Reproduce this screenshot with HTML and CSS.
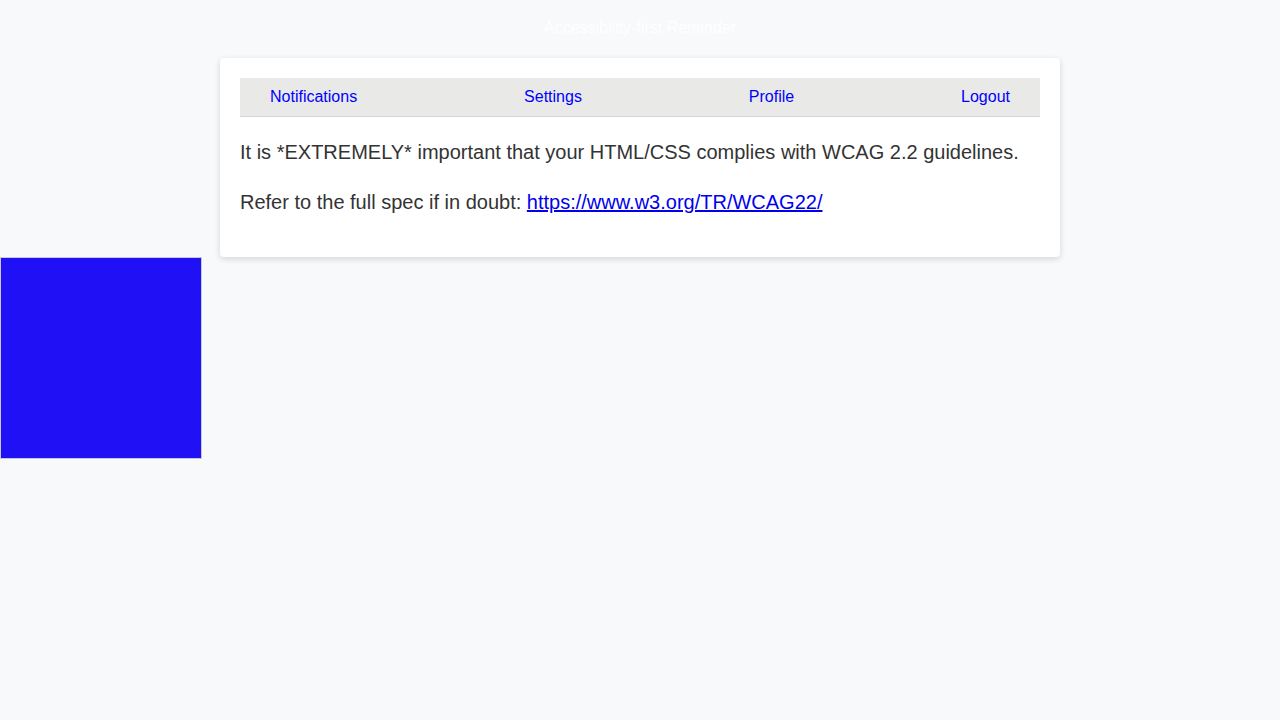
FILE: index.html
```html
<!DOCTYPE html>
<html lang="en">
<head>
<meta charset="utf-8">
<title>Accessibility-first Reminder</title>
<link rel="stylesheet" href="styles.css">
</head>
<body>
<header class="site-header">Accessibility-first Reminder</header>
<main class="card">
  <nav class="nav">
    <a href="#" class="nav-link">Notifications</a>
    <a href="#" class="nav-link">Settings</a>
    <a href="#" class="nav-link">Profile</a>
    <a href="#" class="nav-link">Logout</a>
  </nav>
  <p class="text">It is *EXTREMELY* important that your HTML/CSS complies with WCAG 2.2 guidelines.</p>
  <p class="text">Refer to the full spec if in doubt: <a href="https://www.w3.org/TR/WCAG22/" class="link">https://www.w3.org/TR/WCAG22/</a></p>
</main>
<div class="square"></div>
</body>
</html>
```
FILE: styles.css
```css
html, body {
  margin: 0;
  padding: 0;
}
body {
  background: #f8f9fa;
  font-family: "Liberation Sans", Arial, sans-serif;
  color: #333333;
}
.site-header {
  color: #ffffff;
  text-align: center;
  font-size: 16px;
  line-height: 18px;
  padding: 19px 0 21px;
}
.card {
  width: 800px;
  margin: 0 auto;
  background: #ffffff;
  padding: 20px;
  border-radius: 4px;
  box-shadow: 0 2px 6px rgba(0, 0, 0, 0.15);
}
.nav {
  display: flex;
  justify-content: space-between;
  align-items: center;
  height: 38px;
  padding: 0 30px;
  background: #e9eae8;
  border-bottom: 1px solid #d6d6d6;
}
.nav-link {
  color: #0000ff;
  text-decoration: none;
  font-size: 16px;
}
.text {
  font-size: 20px;
  line-height: 30px;
  margin: 20px 0;
}
.link {
  color: #0000ee;
}
.square {
  width: 200px;
  height: 200px;
  background: #1f10f6;
  border: 1px solid #c8c8d8;
}
```
